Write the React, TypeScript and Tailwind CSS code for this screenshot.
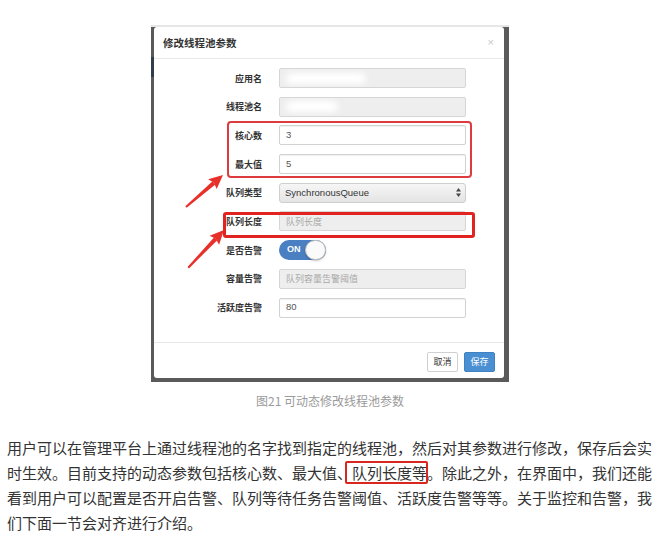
import React from "react";

const cjk = { fontFamily: '"Noto Sans CJK SC", "Noto Sans", sans-serif' };
const latin = { fontFamily: '"Liberation Sans", "Noto Sans CJK SC", sans-serif' };

function Label({ children }: { children: React.ReactNode }) {
  return (
    <div className="w-[108px] shrink-0 text-right text-[9px] font-bold leading-none text-[#333]" style={cjk}>
      {children}
    </div>
  );
}

function Field({ disabled, value, placeholder, blur }: { disabled?: boolean; value?: string; placeholder?: string; blur?: number }) {
  return (
    <div
      className={
        "relative ml-[17px] flex h-[20px] w-[187px] items-center overflow-hidden rounded-[2px] border pl-[6px] text-[9.5px] " +
        (disabled ? "border-[#d6d6d6] bg-[#eeeeee]" : "border-[#d2d2d2] bg-white shadow-[inset_0_1px_1px_rgba(0,0,0,0.06)]")
      }
      style={latin}
    >
      {value && <span className="text-[#555]">{value}</span>}
      {placeholder && (
        <span className="text-[9px] text-[#a8a8a8]" style={cjk}>
          {placeholder}
        </span>
      )}
      {blur ? <div className="h-[11px] rounded-full bg-white blur-[3px]" style={{ width: blur }} /> : null}
    </div>
  );
}

function Row({ label, children }: { label: string; children: React.ReactNode }) {
  return (
    <div className="flex h-[20px] items-center">
      <Label>{label}</Label>
      {children}
    </div>
  );
}

function Arrow({ x, y, angle, len }: { x: number; y: number; angle: number; len: number }) {
  return (
    <g transform={`translate(${x} ${y}) rotate(${angle})`}>
      <polygon points={`-12,-2.1 ${-len},-1 ${-len},1 -12,2.1`} fill="#e8302a" />
      <polygon points="0,0 -14,-6.5 -12,0 -14,6.5" fill="#e8302a" />
    </g>
  );
}

function Modal() {
  return (
    <div className="flex h-full flex-col rounded-[3px] bg-white">
      {/* header */}
      <div className="flex h-[32px] items-center justify-between border-b border-[#e8e8e8] pl-[9px] pr-[10px]">
        <span className="text-[10.5px] font-bold text-[#333]" style={cjk}>
          修改线程池参数
        </span>
        <span className="text-[11px] leading-none text-[#c8c8c8]" style={latin}>
          ×
        </span>
      </div>

      {/* body */}
      <div className="flex flex-col gap-[8.7px] pt-[9px] pb-[24px]">
        <Row label="应用名">
          <Field disabled blur={80} />
        </Row>
        <Row label="线程池名">
          <Field disabled blur={52} />
        </Row>
        <Row label="核心数">
          <Field value="3" />
        </Row>
        <Row label="最大值">
          <Field value="5" />
        </Row>
        <Row label="队列类型">
          <div
            className="ml-[17px] flex h-[20px] w-[187px] items-center justify-between rounded-[3px] border border-[#cfcfcf] bg-linear-to-b from-[#f6f6f6] to-[#e4e4e4] pl-[5px] pr-[4px] text-[9.5px] text-[#333]"
            style={latin}
          >
            <span>SynchronousQueue</span>
            <svg width="5" height="9" viewBox="0 0 5 9">
              <polygon points="2.5,0 5,3.4 0,3.4" fill="#444" />
              <polygon points="2.5,9 5,5.6 0,5.6" fill="#444" />
            </svg>
          </div>
        </Row>
        <Row label="队列长度">
          <Field disabled placeholder="队列长度" />
        </Row>
        <Row label="是否告警">
          <div className="relative ml-[17px] h-[20px] w-[47px] rounded-full bg-[#4a7fc2]">
            <span className="absolute left-[8px] top-[5px] text-[9px] font-bold leading-none text-white" style={latin}>
              ON
            </span>
            <div className="absolute right-0 top-0 h-[20px] w-[21px] rounded-full border border-[#bfbfbf] bg-[#fafafa] shadow-[0_1px_2px_rgba(0,0,0,0.25)]" />
          </div>
        </Row>
        <Row label="容量告警">
          <Field disabled placeholder="队列容量告警阈值" />
        </Row>
        <Row label="活跃度告警">
          <Field value="80" />
        </Row>
      </div>

      {/* footer */}
      <div className="flex justify-end gap-[6px] border-t border-[#e8e8e8] pt-[9px] pr-[9px]">
        <div
          className="flex h-[20px] w-[31px] items-center justify-center rounded-[2px] border border-[#d0d0d0] bg-white text-[9px] text-[#333]"
          style={cjk}
        >
          取消
        </div>
        <div
          className="flex h-[20px] w-[31px] items-center justify-center rounded-[2px] border border-[#3f82c4] bg-[#4a8fd2] text-[9px] text-white"
          style={cjk}
        >
          保存
        </div>
      </div>
    </div>
  );
}

export default function App() {
  return (
    <div className="min-h-[546px] bg-white pt-[25px] pl-[7px]">
      <div className="w-[646px]">
        {/* screenshot */}
        <div className="relative mx-auto h-[357px] w-[358px] border-t-2 border-[#e6e6e6] bg-[#5a5a5a] pb-[4px] pl-[3px] pr-[5px]">
          <div className="absolute left-0 top-[30px] h-[20px] w-[3px] bg-[#2f3d4c]" />
          <Modal />

          {/* annotations */}
          <div className="absolute left-[76px] top-[94px] h-[57px] w-[245px] rounded-[4px] border-2 border-[#dd3b40]" />
          <div className="absolute left-[72px] top-[185px] h-[26px] w-[252px] rounded-[3px] border-[3px] border-[#e1241f]" />
          <svg className="absolute left-0 top-[-2px]" width="358" height="357" viewBox="0 0 358 357">
            <Arrow x={72} y={150} angle={-40.9} len={49} />
            <Arrow x={73} y={205} angle={-46.5} len={52} />
          </svg>
        </div>

        {/* caption */}
        <div className="mt-[10px] text-center text-[12px] leading-[18px] text-[#9a9a9a]" style={cjk}>
          图21 可动态修改线程池参数
        </div>

        {/* paragraph */}
        <p className="mt-[25px] w-[646px] text-[15px] leading-[25px] text-[#333]" style={cjk}>
          用户可以在管理平台上通过线程池的名字找到指定的线程池，然后对其参数进行修改，保存后会实时生效。目前支持的动态参数包括核心数、最大值、
          <span className="relative after:absolute after:-left-[7px] after:-right-[1px] after:-top-[1px] after:-bottom-[1px] after:rounded-[2px] after:border-2 after:border-[#d9261e] after:content-['']">
            队列长度等
          </span>
          。除此之外，在界面中，我们还能看到用户可以配置是否开启告警、队列等待任务告警阈值、活跃度告警等等。关于监控和告警，我们下面一节会对齐进行介绍。
        </p>
      </div>
    </div>
  );
}
